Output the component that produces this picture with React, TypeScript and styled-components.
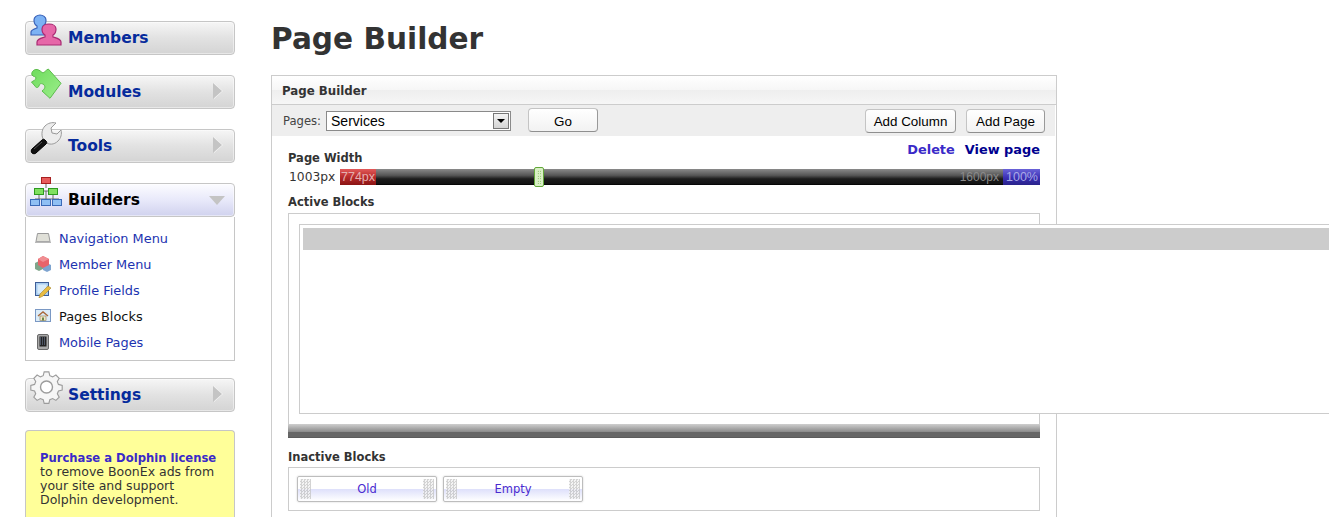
import styled, { createGlobalStyle } from "styled-components";
import type { ReactNode } from "react";

const GlobalStyle = createGlobalStyle`
  * {
    box-sizing: border-box;
  }
  html,
  body {
    margin: 0;
    height: 517px;
    overflow: hidden;
    background: #fff;
    font-family: "DejaVu Sans", Verdana, sans-serif;
    color: #333;
  }
`;

const Page = styled.div`
  display: flex;
  align-items: flex-start;
  width: 1329px;
  height: 517px;
  overflow: hidden;
`;

const Sidebar = styled.aside`
  flex: none;
  width: 210px;
  margin: 21px 0 0 25px;
  display: flex;
  flex-direction: column;
`;

const MenuGroup = styled.div<{ $gap?: number }>`
  margin-bottom: ${(p) => p.$gap ?? 20}px;
`;

const MenuHead = styled.div<{ $active?: boolean }>`
  position: relative;
  height: 34px;
  padding-left: 42px;
  display: flex;
  align-items: center;
  border: 1px solid #c6c6c6;
  border-radius: 4px;
  background: ${(p) =>
    p.$active
      ? "linear-gradient(#fcfcff, #e8e9fa 50%, #d0d2ee)"
      : "linear-gradient(#f6f6f6, #e2e2e2 50%, #d4d4d4)"};
  box-shadow: inset 0 0 0 1px rgba(255, 255, 255, 0.45);
  font-size: 15.5px;
  font-weight: 700;
  color: ${(p) => (p.$active ? "#000" : "#062b9c")};
`;

const HeadIcon = styled.svg`
  position: absolute;
  left: 4px;
  top: -8px;
  width: 33px;
  height: 33px;
`;

const ArrowRight = styled.span`
  position: absolute;
  right: 12px;
  top: 7px;
  border-style: solid;
  border-width: 8px 0 8px 9px;
  border-color: transparent transparent transparent #c4c4c4;
  filter: drop-shadow(1px 0 0 #f4f4f4);
`;

const ArrowDown = styled.span`
  position: absolute;
  right: 9px;
  top: 12px;
  border-style: solid;
  border-width: 9px 8px 0 8px;
  border-color: #c4c4c4 transparent transparent transparent;
`;

const SubMenu = styled.ul`
  list-style: none;
  margin: 0;
  padding: 8px 0 6px 9px;
  height: 144px;
  border: 1px solid #c6c6c6;
  border-top: 0;
`;

const SubItem = styled.li<{ $current?: boolean }>`
  display: flex;
  align-items: center;
  height: 26px;
  gap: 8px;
  font-size: 12.9px;
  color: ${(p) => (p.$current ? "#111" : "#1c33b0")};
`;

const SubIcon = styled.svg`
  flex: none;
  width: 16px;
  height: 16px;
`;

const Promo = styled.div`
  border: 1px solid #c6c6c6;
  border-bottom: 0;
  border-radius: 4px 4px 0 0;
  background: #ffff99;
  padding: 20px 14px 0;
  height: 87px;
  font-size: 12.5px;
  line-height: 14px;
  color: #333;
`;

const PromoLink = styled.div`
  font-size: 11.6px;
  font-weight: 700;
  white-space: nowrap;
  color: #3a2ac8;
`;

const Main = styled.main`
  flex: none;
  width: 786px;
  margin-left: 36px;
`;

const Title = styled.h1`
  margin: 22px 0 18px;
  height: 35px;
  font-size: 29.6px;
  line-height: 35px;
  font-weight: 700;
  color: #333;
`;

const Panel = styled.section`
  width: 786px;
  height: 500px;
  border: 1px solid #ccc;
`;

const PanelHead = styled.div`
  height: 29px;
  padding: 8px 0 0 10px;
  border-bottom: 1px solid #ccc;
  background: linear-gradient(#fff, #f6f6f6 50%, #eeeeee 50%, #f6f6f6);
  font-size: 11.8px;
  line-height: 15px;
  font-weight: 700;
  color: #333;
`;

const Toolbar = styled.div`
  display: flex;
  align-items: center;
  height: 31px;
  margin-right: 1px;
  padding-left: 11px;
  background: #eee;
  font-size: 11.6px;
  color: #444;
`;

const SelectBox = styled.div`
  display: flex;
  align-items: center;
  justify-content: space-between;
  width: 185px;
  height: 20px;
  margin: 0 17px 0 5px;
  padding: 0 1px 0 4px;
  border: 1px solid #8a8a8a;
  background: #fff;
  font-family: "Liberation Sans", Arial, sans-serif;
  font-size: 14px;
  color: #000;
`;

const SelectArrow = styled.span`
  position: relative;
  width: 16px;
  height: 16px;
  background: linear-gradient(#f4f4f4, #d4d4d4);
  border: 1px solid #777;

  &::after {
    content: "";
    position: absolute;
    left: 3px;
    top: 5px;
    border-style: solid;
    border-width: 4px 4px 0 4px;
    border-color: #000 transparent transparent transparent;
  }
`;

const Button = styled.button<{ $width: number }>`
  flex: none;
  width: ${(p) => p.$width}px;
  height: 24px;
  padding: 2px 0 0;
  border: 1px solid #c4c4c4;
  border-bottom-color: #8f8f8f;
  border-right-color: #999;
  border-radius: 4px;
  background: linear-gradient(#fff, #f2f2f2);
  font-family: "Liberation Sans", Arial, sans-serif;
  font-size: 13.4px;
  color: #000;
`;

const GoButton = styled(Button)`
  margin-bottom: 2px;
  padding-top: 4px;
`;

const ToolbarEnd = styled.div`
  display: flex;
  gap: 10px;
  margin-left: auto;
  padding-right: 10px;
`;

const Content = styled.div`
  padding: 6px 16px 0;
`;

const TopRow = styled.div`
  display: flex;
  justify-content: space-between;
  height: 23px;
`;

const Label = styled.div`
  font-size: 11.5px;
  line-height: 14px;
  font-weight: 700;
  color: #333;
`;

const WidthLabel = styled(Label)`
  align-self: flex-end;
`;

const Links = styled.div`
  display: flex;
  gap: 10px;
  font-size: 12.9px;
  line-height: 15px;
  font-weight: 700;
`;

const PlainLink = styled.span<{ $dark?: boolean }>`
  color: ${(p) => (p.$dark ? "#00008f" : "#3a2ac8")};
`;

const SliderRow = styled.div`
  display: flex;
  align-items: center;
  height: 24px;
  font-size: 12.3px;
  color: #333;
`;

const SliderValue = styled.span`
  flex: none;
  width: 52px;
  padding-left: 1px;
`;

const Track = styled.div`
  position: relative;
  flex: 1;
  height: 16px;
  display: flex;
  justify-content: space-between;
  background: linear-gradient(#8a8a8a, #555 40%, #1c1c1c 62%, #141414 90%, #000);
  font-family: "Liberation Sans", Arial, sans-serif;
  font-size: 12.5px;
  line-height: 16px;
`;

const TrackMin = styled.span`
  width: 36px;
  padding-left: 1px;
  overflow: hidden;
  white-space: nowrap;
  color: #e6b0b0;
  background: linear-gradient(#e25a5a, #b82a2a 50%, #8a1414);
`;

const TrackEnd = styled.div`
  display: flex;
  font-size: 12px;
  color: #8a8a8a;
`;

const TrackMax = styled.span`
  width: 37px;
  margin-left: 4px;
  padding-left: 3px;
  font-size: 12.5px;
  color: #a9a9e6;
  background: linear-gradient(#6a63d8, #3a2fb4 55%, #29228a);
`;

const Handle = styled.span`
  position: absolute;
  left: 194px;
  top: -2px;
  width: 10px;
  height: 20px;
  border: 1px solid #63a83a;
  border-radius: 2px;
  background: #d8efc4;

  &::after {
    content: "";
    position: absolute;
    left: 2px;
    top: 2px;
    right: 2px;
    bottom: 2px;
    background-image: radial-gradient(#63a83a 35%, transparent 45%);
    background-size: 2.5px 2.5px;
  }
`;

const SectionLabel = styled(Label)`
  margin-top: 6px;
  height: 17px;
`;

const ActiveFrame = styled.div`
  width: 752px;
  height: 211px;
  margin-top: 1px;
  padding: 10px 0 0 10px;
  border: 1px solid #ccc;
  border-bottom: 0;
`;

const ColumnBox = styled.div`
  width: 1100px;
  height: 190px;
  padding: 3px;
  border: 1px solid #ccc;
  background: #fff;
`;

const ColumnHead = styled.div`
  height: 22px;
  background: #ccc;
`;

const FrameFoot = styled.div`
  width: 752px;
  height: 14px;
  background: linear-gradient(#cfcfcf, #8c8c8c 55%, #666 58%, #666 90%, #555);
`;

const InactiveLabel = styled(Label)`
  margin-top: 12px;
  height: 17px;
`;

const InactiveFrame = styled.div`
  display: flex;
  gap: 6px;
  width: 752px;
  height: 44px;
  padding: 8px 8px 0;
  border: 1px solid #ccc;
`;

const Chip = styled.div`
  position: relative;
  width: 140px;
  height: 26px;
  display: flex;
  align-items: center;
  justify-content: center;
  border: 1px solid #bdbdbd;
  border-radius: 2px;
  background: linear-gradient(#fff, #fff 50%, #dfe1fb 52%, #fff);
  box-shadow: 0 0 2px rgba(0, 0, 0, 0.2);
  font-size: 11.5px;
  color: #4a2bd0;
`;

const ChipGrip = styled.span<{ $side: "left" | "right" }>`
  position: absolute;
  top: 2px;
  bottom: 2px;
  ${(p) => p.$side}: 2px;
  width: 11px;
  background-image: conic-gradient(#c4c4c4 25%, #f0f0f0 0 50%, #c4c4c4 0 75%, #f0f0f0 0);
  background-size: 3px 3px;
  opacity: 0.75;
`;

const MembersIcon = () => (
  <HeadIcon viewBox="0 0 33 33">
    <path d="M1 21v-3c0-2 3-3 6-4v-2c-2-1-3-3-3-6 0-3 3-5 6-5s6 2 6 5c0 3-1 5-3 6v2c3 1 6 2 6 4v3z" fill="#7cb2f4" stroke="#3a62b8" strokeWidth="1.2" />
    <path d="M7 31v-3c0-3 5-4 8-5v-2c-2-1-3-3-3-6 0-3 3-5 7-5s7 2 7 5c0 3-1 5-3 6v2c3 1 8 2 8 5v3z" fill="#e667a8" stroke="#a92a72" strokeWidth="1.2" />
  </HeadIcon>
);

const PuzzleIcon = () => (
  <HeadIcon viewBox="0 0 33 33">
    <defs>
      <linearGradient id="puzzleFill" x1="0" y1="0" x2="1" y2="1">
        <stop offset="0" stopColor="#6edc5c" />
        <stop offset="1" stopColor="#9cee8c" />
      </linearGradient>
    </defs>
    <path d="M18.3 1L31 15.3 20 30.3 12 23C15 21 16 18 13 16 11 15 9 16 9 18 8 20 6 20 5 18L1.500 14C3 13 6 12 6 10 6 8 3 9 2 7 1 4 4 1 7 1.500 10 2 11 4 13 5 15 4 16 2 18.3 1Z" fill="url(#puzzleFill)" stroke="#5cbc4c" strokeWidth="1" />
  </HeadIcon>
);

const WrenchIcon = () => (
  <HeadIcon viewBox="0 0 33 33">
    <path d="M13 17C11 12 12 7 15 4 18 1 22 0 26 1L21 6 22 11 27 12 31 8C32 12 31 16 28 19 24 23 19 23 15 20Z" fill="#ececec" stroke="#9a9a9a" strokeWidth="1" />
    <path d="M13 17l4 4-2 2-4-4z" fill="#c4c4c4" />
    <path d="M2 27L12 18c1-1 2-1 3 0l1 1c1 1 1 2 0 3L6 31c-1 1-3 1-4 0-1-1-1-3 0-4z" fill="#111" stroke="#000" />
    <path d="M4 27l8-7" stroke="#555" strokeWidth="1" />
  </HeadIcon>
);

const TreeIcon = () => (
  <HeadIcon viewBox="0 0 33 33">
    <path d="M16 8v4M9 15h14M9 18v5M23 18v5M16 15v8M5 23h24" stroke="#6a6a6a" fill="none" />
    <rect x="11.500" y="1.500" width="9" height="6" fill="#e85c5c" stroke="#a82020" />
    <rect x="4.500" y="12.500" width="9" height="6" fill="#7fe060" stroke="#2e9a20" />
    <rect x="18.500" y="12.500" width="9" height="6" fill="#7fe060" stroke="#2e9a20" />
    <rect x="0.500" y="23.500" width="9" height="6" fill="#8fc0f4" stroke="#3a6ab8" />
    <rect x="11.500" y="23.500" width="9" height="6" fill="#8fc0f4" stroke="#3a6ab8" />
    <rect x="22.500" y="23.500" width="9" height="6" fill="#8fc0f4" stroke="#3a6ab8" />
  </HeadIcon>
);

const GearIcon = () => (
  <HeadIcon viewBox="0 0 33 33">
    <path d="M14 1.500h5l1 4 3 1.300 3.500-2 3.500 3.500-2 3.500 1.200 3 4 1v5l-4 1-1.200 3 2 3.500-3.500 3.500-3.500-2-3 1.200-1 4h-5l-1-4-3-1.200-3.500 2-3.500-3.500 2-3.500-1.200-3-4-1v-5l4-1 1.200-3-2-3.500 3.500-3.500 3.500 2 3-1.300z" fill="#f6f6f6" stroke="#9c9c9c" strokeWidth="1.200" transform="translate(1 -0.500) scale(0.94)" />
    <circle cx="16.500" cy="16" r="6" fill="#fff" stroke="#9c9c9c" strokeWidth="1.400" />
  </HeadIcon>
);

const NavIcon = () => (
  <SubIcon viewBox="0 0 16 16">
    <path d="M2.500 3.500h11l1.500 8H1z" fill="#e0e0d8" stroke="#9a9a9a" />
    <path d="M0 11.500h16v1.500H0z" fill="#b8b8b8" />
  </SubIcon>
);

const CubesIcon = () => (
  <SubIcon viewBox="0 0 16 16">
    <path d="M0 7l4-2 4 2v6l-4 2-4-2z" fill="#7fa58a" />
    <path d="M8 9l4-2 4 2v5l-4 2-4-2z" fill="#7ea4d0" />
    <path d="M3 3l5-3 6 3v6l-6 3-5-3z" fill="#e8646a" />
    <path d="M3 3l5 3 6-3-6-3z" fill="#f08e92" />
  </SubIcon>
);

const ProfileIcon = () => (
  <SubIcon viewBox="0 0 16 16">
    <rect x="0.500" y="0.500" width="13" height="13" fill="#a8cdf0" stroke="#3e5e98" />
    <rect x="2.500" y="2.500" width="9" height="9" fill="#d8ebfa" />
    <path d="M4 16l1-4 8-8 3 2-8 8z" fill="#e8bc42" stroke="#a8842a" strokeWidth="0.600" />
  </SubIcon>
);

const PagesIcon = () => (
  <SubIcon viewBox="0 0 16 16">
    <rect x="0.500" y="1.500" width="15" height="12" fill="#dcecf8" stroke="#7a98c4" />
    <path d="M3 8l5-4 5 4" fill="none" stroke="#a8683a" strokeWidth="1.400" />
    <rect x="5" y="8" width="6" height="4.500" fill="#f2e6c8" stroke="#8a7a50" strokeWidth="0.600" />
    <rect x="7" y="9.500" width="2" height="3" fill="#6a8a4a" />
  </SubIcon>
);

const MobileIcon = () => (
  <SubIcon viewBox="0 0 16 16">
    <rect x="2.500" y="0.500" width="11" height="15" rx="1.500" fill="#a8a8a8" stroke="#6a6a6a" />
    <rect x="4.500" y="2.500" width="7" height="10" fill="#222" />
    <path d="M5 4h6M5 6h6M5 8h6M5 10h6" stroke="#7a8aa8" strokeDasharray="1 1" />
  </SubIcon>
);

const subItems: { label: string; icon: ReactNode; current?: boolean }[] = [
  { label: "Navigation Menu", icon: <NavIcon /> },
  { label: "Member Menu", icon: <CubesIcon /> },
  { label: "Profile Fields", icon: <ProfileIcon /> },
  { label: "Pages Blocks", icon: <PagesIcon />, current: true },
  { label: "Mobile Pages", icon: <MobileIcon /> },
];

export default function App() {
  return (
    <Page>
      <GlobalStyle />
      <Sidebar>
        <MenuGroup>
          <MenuHead>
            <MembersIcon />
            Members
          </MenuHead>
        </MenuGroup>
        <MenuGroup>
          <MenuHead>
            <PuzzleIcon />
            Modules
            <ArrowRight />
          </MenuHead>
        </MenuGroup>
        <MenuGroup>
          <MenuHead>
            <WrenchIcon />
            Tools
            <ArrowRight />
          </MenuHead>
        </MenuGroup>
        <MenuGroup $gap={17}>
          <MenuHead $active>
            <TreeIcon />
            Builders
            <ArrowDown />
          </MenuHead>
          <SubMenu>
            {subItems.map((item) => (
              <SubItem key={item.label} $current={item.current}>
                {item.icon}
                {item.label}
              </SubItem>
            ))}
          </SubMenu>
        </MenuGroup>
        <MenuGroup $gap={18}>
          <MenuHead>
            <GearIcon />
            Settings
            <ArrowRight />
          </MenuHead>
        </MenuGroup>
        <Promo>
          <PromoLink>Purchase a Dolphin license</PromoLink>
          to remove BoonEx ads from your site and support Dolphin development.
        </Promo>
      </Sidebar>
      <Main>
        <Title>Page Builder</Title>
        <Panel>
          <PanelHead>Page Builder</PanelHead>
          <Toolbar>
            Pages:
            <SelectBox>
              Services
              <SelectArrow />
            </SelectBox>
            <GoButton $width={70}>Go</GoButton>
            <ToolbarEnd>
              <Button $width={91}>Add Column</Button>
              <Button $width={79}>Add Page</Button>
            </ToolbarEnd>
          </Toolbar>
          <Content>
            <TopRow>
              <WidthLabel>Page Width</WidthLabel>
              <Links>
                <PlainLink>Delete</PlainLink>
                <PlainLink $dark>View page</PlainLink>
              </Links>
            </TopRow>
            <SliderRow>
              <SliderValue>1003px</SliderValue>
              <Track>
                <TrackMin>774px</TrackMin>
                <TrackEnd>
                  1600px
                  <TrackMax>100%</TrackMax>
                </TrackEnd>
                <Handle />
              </Track>
            </SliderRow>
            <SectionLabel>Active Blocks</SectionLabel>
            <ActiveFrame>
              <ColumnBox>
                <ColumnHead />
              </ColumnBox>
            </ActiveFrame>
            <FrameFoot />
            <InactiveLabel>Inactive Blocks</InactiveLabel>
            <InactiveFrame>
              <Chip>
                <ChipGrip $side="left" />
                Old
                <ChipGrip $side="right" />
              </Chip>
              <Chip>
                <ChipGrip $side="left" />
                Empty
                <ChipGrip $side="right" />
              </Chip>
            </InactiveFrame>
          </Content>
        </Panel>
      </Main>
    </Page>
  );
}
